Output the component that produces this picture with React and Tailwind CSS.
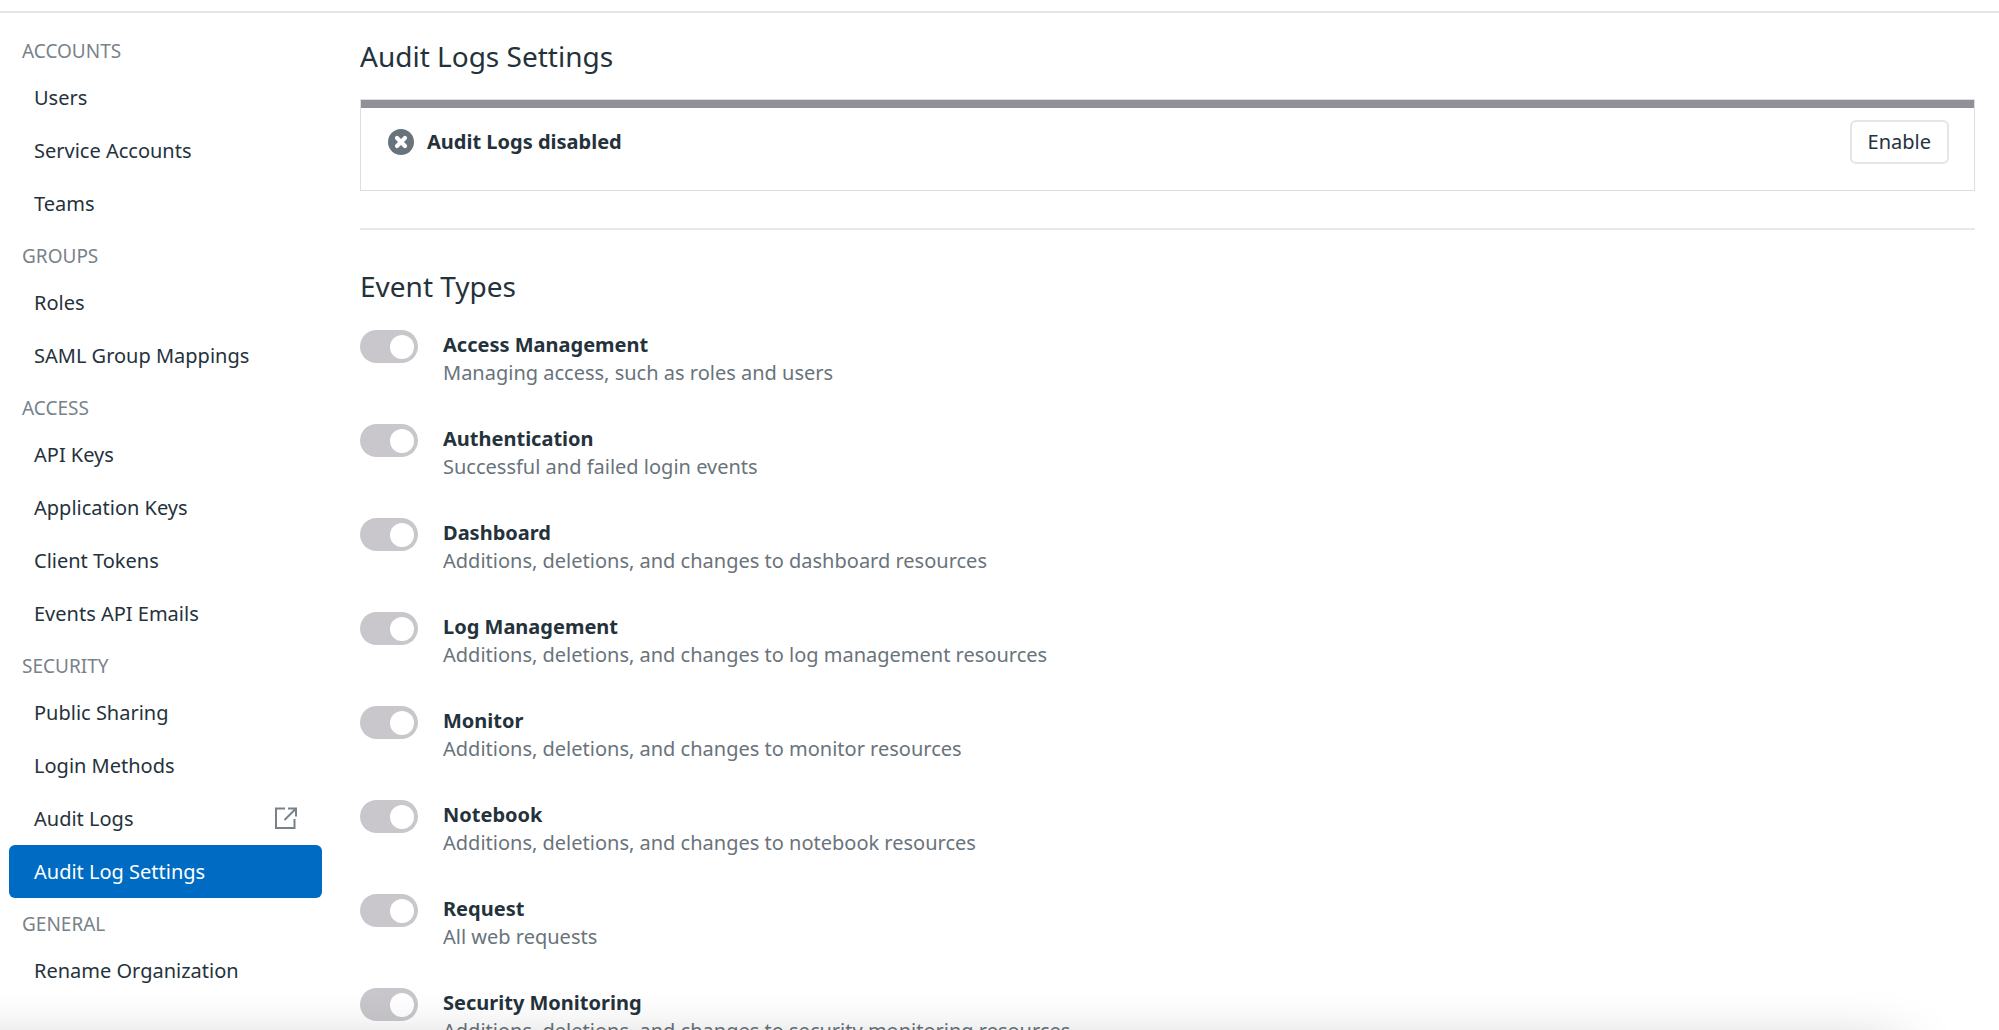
const sections = [
  { title: "ACCOUNTS", items: ["Users", "Service Accounts", "Teams"] },
  { title: "GROUPS", items: ["Roles", "SAML Group Mappings"] },
  { title: "ACCESS", items: ["API Keys", "Application Keys", "Client Tokens", "Events API Emails"] },
  { title: "SECURITY", items: ["Public Sharing", "Login Methods", "Audit Logs", "Audit Log Settings"] },
  { title: "GENERAL", items: ["Rename Organization"] },
];

const activeItem = "Audit Log Settings";
const externalItem = "Audit Logs";

const events = [
  ["Access Management", "Managing access, such as roles and users"],
  ["Authentication", "Successful and failed login events"],
  ["Dashboard", "Additions, deletions, and changes to dashboard resources"],
  ["Log Management", "Additions, deletions, and changes to log management resources"],
  ["Monitor", "Additions, deletions, and changes to monitor resources"],
  ["Notebook", "Additions, deletions, and changes to notebook resources"],
  ["Request", "All web requests"],
  ["Security Monitoring", "Additions, deletions, and changes to security monitoring resources"],
];

function ExternalIcon() {
  return (
    <svg className="h-[24px] w-[22px] text-[#78828a]" viewBox="0 0 22 24" fill="none" stroke="currentColor" strokeWidth="2" aria-hidden="true">
      <path d="M10 1.5H1V21h18.5v-9" />
      <path d="M13 1.5h8V9.5M20.5 2L9.5 13" />
    </svg>
  );
}

function DisabledIcon() {
  return (
    <svg className="h-[26px] w-[26px] shrink-0" viewBox="0 0 26 26" aria-hidden="true">
      <circle cx="13" cy="13" r="13" fill="#69737b" />
      <path d="M9 9l8 8M17 9l-8 8" stroke="#fff" strokeWidth="4.2" strokeLinecap="round" />
    </svg>
  );
}

function Sidebar() {
  return (
    <nav aria-label="Organization settings" className="w-[322px] shrink-0 pl-[9px] pt-3">
      {sections.map((section) => (
        <section key={section.title}>
          <h2 className="h-[46px] pl-[13px] pt-[6px] text-[19px] leading-[40px] text-[#78828a]">{section.title}</h2>
          <ul>
            {section.items.map((item) => (
              <li key={item}>
                <a
                  href="#"
                  aria-current={item === activeItem ? "page" : undefined}
                  className={
                    item === activeItem
                      ? "flex h-[53px] items-center justify-between rounded-md bg-[#006bc2] px-[25px] text-white"
                      : "flex h-[53px] items-center justify-between px-[25px]"
                  }
                >
                  {item}
                  {item === externalItem && <ExternalIcon />}
                </a>
              </li>
            ))}
          </ul>
        </section>
      ))}
    </nav>
  );
}

function EventRow({ name, description, id }) {
  return (
    <li className="flex h-[94px] items-start">
      <input
        id={id}
        type="checkbox"
        role="switch"
        aria-describedby={id + "-description"}
        className="flex h-[33px] w-[58px] shrink-0 appearance-none items-center justify-end rounded-full bg-[#c9c7cc] pr-1 before:size-6 before:rounded-full before:bg-white"
      />
      <div className="pl-[25px] pt-px">
        <label htmlFor={id} className="block font-bold leading-[28px]">{name}</label>
        <p id={id + "-description"} className="leading-[28px] text-[#69737b]">{description}</p>
      </div>
    </li>
  );
}

export default function App() {
  return (
    <div className="relative h-screen overflow-hidden bg-white pt-[11px] font-['Noto_Sans',sans-serif] text-[20px] text-[#24323c]">
      <div className="flex border-t-2 border-[#e5e5e7]">
        <Sidebar />
        <main className="min-w-0 flex-1 pl-[38px] pr-6">
          <h1 className="pt-[23px] text-[28px] leading-[40px]">Audit Logs Settings</h1>
          <section className="mt-[23px] border border-[#dedee2]">
            <div className="h-2 bg-[#919096]" />
            <div className="flex h-[82px] items-start justify-between pl-[27px] pr-[25px] pt-3">
              <div className="flex h-11 items-center gap-[13px]">
                <DisabledIcon />
                <strong>Audit Logs disabled</strong>
              </div>
              <button type="button" className="h-11 rounded-md border-2 border-[#e5e5e7] px-4">Enable</button>
            </div>
          </section>
          <hr className="mt-[37px] border-t-2 border-[#e8e8ea]" />
          <h2 className="mt-9 text-[28px] leading-[40px]">Event Types</h2>
          <ul className="mt-[24px]">
            {events.map(([name, description], index) => (
              <EventRow key={name} id={"event-" + index} name={name} description={description} />
            ))}
          </ul>
        </main>
      </div>
      <div aria-hidden="true" className="pointer-events-none absolute -left-24 right-[99px] top-full h-40 shadow-[0_23px_60px_rgba(0,0,0,0.3)]" />
    </div>
  );
}
